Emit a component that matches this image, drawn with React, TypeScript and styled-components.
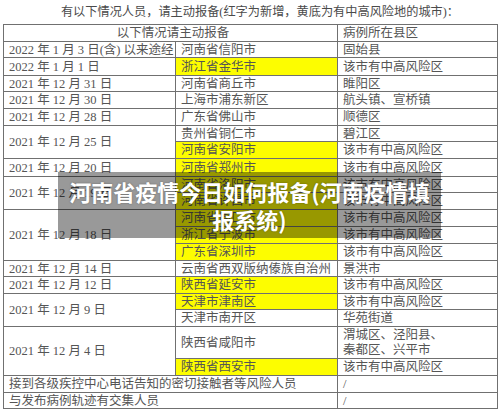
import React from 'react';
import styled, { createGlobalStyle } from 'styled-components';

const Global = createGlobalStyle`
  html, body { margin: 0; padding: 0; background: #fff; }
  body { font-family: "Liberation Serif", "Noto Sans CJK SC", serif; }
`;

const Page = styled.div`
  position: relative;
  width: 500px;
  height: 412px;
  overflow: hidden;
  background: #fff;
`;

const Heading = styled.div`
  height: 24px;
  line-height: 24px;
  padding-left: 20px;
  text-align: center;
  font-size: 12.2px;
  color: #4a4a4a;
  white-space: nowrap;
`;

const Table = styled.table`
  margin-left: 3px;
  width: 494px;
  table-layout: fixed;
  border-collapse: collapse;
  border: 1.5px solid #8a8a8a;
  font-size: 12.5px;
  color: #555;
`;

const Row = styled.tr<{ $h: number }>`
  height: ${(p) => p.$h}px;
`;

const Cell = styled.td<{ $hl?: boolean; $center?: boolean }>`
  border: 1px solid #707070;
  padding: 0 0 0 5px;
  background: ${(p) => (p.$hl ? '#fdfd00' : 'transparent')};
  text-align: ${(p) => (p.$center ? 'center' : 'left')};
  vertical-align: middle;
  line-height: 14px;
  white-space: nowrap;
  overflow: hidden;
`;

const Two = styled.div`
  white-space: pre-line;
  line-height: 15px;
`;

const Overlay = styled.div`
  position: absolute;
  left: 58px;
  top: 172px;
  width: 383px;
  height: 66px;
  background: rgba(0, 0, 0, 0.4);
  display: flex;
  align-items: center;
  justify-content: center;
  padding: 0 8px;
  box-sizing: border-box;
`;

const Caption = styled.div`
  font-family: "Noto Sans CJK SC", "Liberation Sans", sans-serif;
  font-weight: 700;
  font-size: 22px;
  line-height: 28px;
  color: #fff;
  text-align: center;
  text-shadow: 0 0 2px rgba(0, 0, 0, 0.35);
`;

type Item = { city: string; area: string; h: number; hl?: boolean; tall?: boolean };
type Group = { date: string; items: Item[] };

const FM = '该市有中高风险区';

const groups: Group[] = [
  { date: '2022 年 1 月 3 日(含) 以来途经', items: [{ city: '河南省信阳市', area: '固始县', h: 16 }] },
  { date: '2022 年 1 月 1 日', items: [{ city: '浙江省金华市', area: FM, hl: true, h: 18 }] },
  { date: '2021 年 12 月 31 日', items: [{ city: '河南省商丘市', area: '睢阳区', h: 16 }] },
  { date: '2021 年 12 月 30 日', items: [{ city: '上海市浦东新区', area: '航头镇、宣桥镇', h: 17 }] },
  { date: '2021 年 12 月 28 日', items: [{ city: '广东省佛山市', area: '顺德区', h: 17 }] },
  {
    date: '2021 年 12 月 25 日',
    items: [
      { city: '贵州省铜仁市', area: '碧江区', h: 16 },
      { city: '河南省安阳市', area: FM, hl: true, h: 17 },
    ],
  },
  { date: '2021 年 12 月 20 日', items: [{ city: '河南省郑州市', area: FM, hl: true, h: 18 }] },
  {
    date: '2021 年 12 月 19 日',
    items: [
      { city: '河南省洛阳市', area: FM, hl: true, h: 16 },
      { city: '河南省许昌市', area: FM, hl: true, h: 17 },
    ],
  },
  {
    date: '2021 年 12 月 18 日',
    items: [
      { city: '河南省周口市', area: FM, hl: true, h: 17 },
      { city: '浙江省宁波市', area: FM, hl: true, h: 17 },
      { city: '广东省深圳市', area: FM, hl: true, h: 17 },
    ],
  },
  { date: '2021 年 12 月 14 日', items: [{ city: '云南省西双版纳傣族自治州', area: '景洪市', h: 16 }] },
  { date: '2021 年 12 月 12 日', items: [{ city: '陕西省延安市', area: FM, hl: true, h: 17 }] },
  {
    date: '2021 年 12 月 9 日',
    items: [
      { city: '天津市津南区', area: FM, hl: true, h: 16 },
      { city: '天津市南开区', area: '华苑街道', h: 17 },
    ],
  },
  {
    date: '2021 年 12 月 4 日',
    items: [
      { city: '陕西省咸阳市', area: '渭城区、泾阳县、\n秦都区、兴平市', tall: true, h: 32 },
      { city: '陕西省西安市', area: FM, hl: true, h: 17 },
    ],
  },
];

export default function App() {
  return (
    <Page>
      <Global />
      <Heading>有以下情况人员，请主动报备(红字为新增，黄底为有中高风险地的城市)：</Heading>
      <Table>
        <colgroup>
          <col style={{ width: 172 }} />
          <col style={{ width: 162 }} />
          <col style={{ width: 160 }} />
        </colgroup>
        <tbody>
          <Row $h={17}>
            <Cell colSpan={2} $center>以下情况请主动报备</Cell>
            <Cell>病例所在县区</Cell>
          </Row>
          {groups.map((g) =>
            g.items.map((it, i) => (
              <Row key={g.date + i} $h={it.h}>
                {i === 0 && <Cell rowSpan={g.items.length}>{g.date}</Cell>}
                <Cell $hl={it.hl}>{it.city}</Cell>
                <Cell>{it.tall ? <Two>{it.area}</Two> : it.area}</Cell>
              </Row>
            ))
          )}
          <Row $h={17}>
            <Cell colSpan={2}>接到各级疾控中心电话告知的密切接触者等风险人员</Cell>
            <Cell>/</Cell>
          </Row>
          <Row $h={16}>
            <Cell colSpan={2}>与发布病例轨迹有交集人员</Cell>
            <Cell>/</Cell>
          </Row>
        </tbody>
      </Table>
      <Overlay>
        <Caption>河南省疫情今日如何报备(河南疫情填报系统)</Caption>
      </Overlay>
    </Page>
  );
}
